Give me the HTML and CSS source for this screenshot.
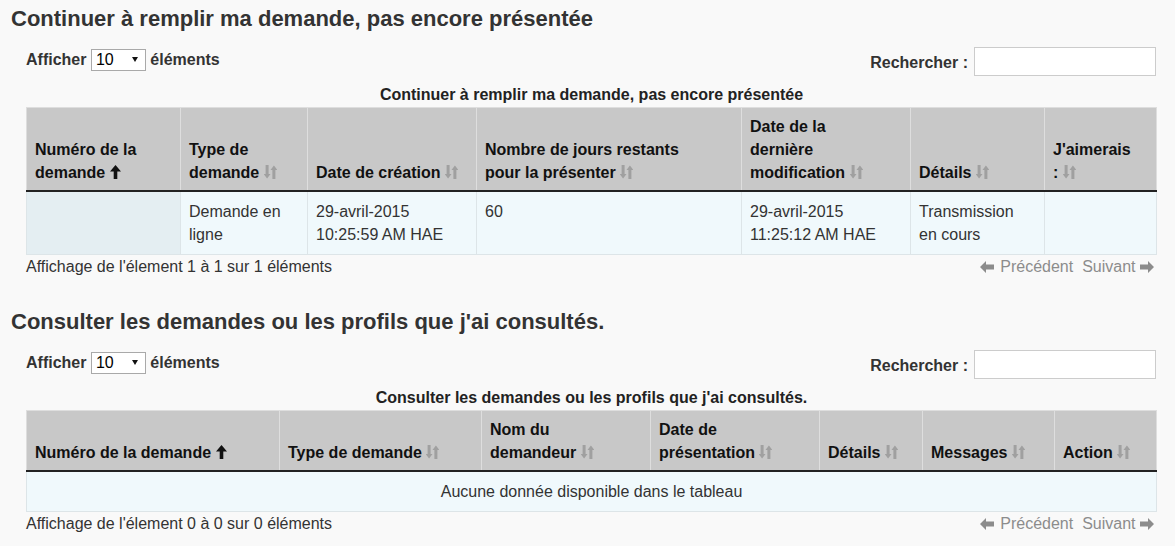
FILE: index.html
```html
<!DOCTYPE html>
<html lang="fr">
<head>
    <meta charset="UTF-8">
    <title>Mes demandes</title>
    <link rel="stylesheet" href="styles.css">
</head>
<body>
    <!-- Demandes en brouillon -->
    <section class="section">
        <h2>Continuer à remplir ma demande, pas encore présentée</h2>
        <div class="dt-wrapper">
            <div class="dt-top">
                <div class="dt-length">
                    <label>Afficher
                        <span class="select-wrap"><select><option>10</option><option>25</option><option>50</option></select></span>
                        éléments</label>
                </div>
                <div class="dt-filter">
                    <label for="search1">Rechercher :</label>
                    <input type="search" id="search1">
                </div>
            </div>
            <table class="dt-table">
                <caption>Continuer à remplir ma demande, pas encore présentée</caption>
                <colgroup>
                    <col class="w154"><col class="w127"><col class="w169"><col class="w265"><col class="w169"><col class="w134"><col class="w112">
                </colgroup>
                <thead>
                    <tr>
                        <th>Numéro de la<br>demande <svg class="sorted-icon" viewBox="0 0 11 14"><path d="M5.5 0 11 6.5H7.3V14H3.7V6.5H0z"/></svg></th>
                        <th>Type de<br>demande <svg class="sort-icon" viewBox="0 0 13 14"><path d="M1.6 0h3v9h1.9L3.1 13.6-.3 9h1.9zM8.4 14V5H6.5L9.9.4 13.3 5h-1.9v9z"/></svg></th>
                        <th>Date de création <svg class="sort-icon" viewBox="0 0 13 14"><path d="M1.6 0h3v9h1.9L3.1 13.6-.3 9h1.9zM8.4 14V5H6.5L9.9.4 13.3 5h-1.9v9z"/></svg></th>
                        <th>Nombre de jours restants<br>pour la présenter <svg class="sort-icon" viewBox="0 0 13 14"><path d="M1.6 0h3v9h1.9L3.1 13.6-.3 9h1.9zM8.4 14V5H6.5L9.9.4 13.3 5h-1.9v9z"/></svg></th>
                        <th>Date de la<br>dernière<br>modification <svg class="sort-icon" viewBox="0 0 13 14"><path d="M1.6 0h3v9h1.9L3.1 13.6-.3 9h1.9zM8.4 14V5H6.5L9.9.4 13.3 5h-1.9v9z"/></svg></th>
                        <th>Détails <svg class="sort-icon" viewBox="0 0 13 14"><path d="M1.6 0h3v9h1.9L3.1 13.6-.3 9h1.9zM8.4 14V5H6.5L9.9.4 13.3 5h-1.9v9z"/></svg></th>
                        <th>J'aimerais<br>: <svg class="sort-icon" viewBox="0 0 13 14"><path d="M1.6 0h3v9h1.9L3.1 13.6-.3 9h1.9zM8.4 14V5H6.5L9.9.4 13.3 5h-1.9v9z"/></svg></th>
                    </tr>
                </thead>
                <tbody>
                    <tr>
                        <td class="sorting-col"></td>
                        <td>Demande en<br>ligne</td>
                        <td>29-avril-2015<br>10:25:59 AM HAE</td>
                        <td>60</td>
                        <td>29-avril-2015<br>11:25:12 AM HAE</td>
                        <td>Transmission<br>en cours</td>
                        <td></td>
                    </tr>
                </tbody>
            </table>
            <div class="dt-bottom">
                <div class="dt-info">Affichage de l'élement 1 à 1 sur 1 éléments</div>
                <div class="dt-paginate">
                    <a class="page-link">
                        <svg class="page-arrow" viewBox="0 0 14 12"><path d="M0 6 6 0v3.6h8v4.8H6V12z"/></svg>
                        Précédent</a>
                    <a class="page-link">Suivant
                        <svg class="page-arrow" viewBox="0 0 14 12"><path d="M14 6 8 0v3.6H0v4.8h8V12z"/></svg></a>
                </div>
            </div>
        </div>
    </section>

    <!-- Demandes consultées -->
    <section class="section">
        <h2>Consulter les demandes ou les profils que j'ai consultés.</h2>
        <div class="dt-wrapper">
            <div class="dt-top">
                <div class="dt-length">
                    <label>Afficher
                        <span class="select-wrap"><select><option>10</option><option>25</option><option>50</option></select></span>
                        éléments</label>
                </div>
                <div class="dt-filter">
                    <label for="search2">Rechercher :</label>
                    <input type="search" id="search2">
                </div>
            </div>
            <table class="dt-table">
                <caption>Consulter les demandes ou les profils que j'ai consultés.</caption>
                <colgroup>
                    <col class="w253"><col class="w202"><col class="w169"><col class="w169"><col class="w103"><col class="w132"><col class="w102">
                </colgroup>
                <thead>
                    <tr>
                        <th>Numéro de la demande <svg class="sorted-icon" viewBox="0 0 11 14"><path d="M5.5 0 11 6.5H7.3V14H3.7V6.5H0z"/></svg></th>
                        <th>Type de demande <svg class="sort-icon" viewBox="0 0 13 14"><path d="M1.6 0h3v9h1.9L3.1 13.6-.3 9h1.9zM8.4 14V5H6.5L9.9.4 13.3 5h-1.9v9z"/></svg></th>
                        <th>Nom du<br>demandeur <svg class="sort-icon" viewBox="0 0 13 14"><path d="M1.6 0h3v9h1.9L3.1 13.6-.3 9h1.9zM8.4 14V5H6.5L9.9.4 13.3 5h-1.9v9z"/></svg></th>
                        <th>Date de<br>présentation <svg class="sort-icon" viewBox="0 0 13 14"><path d="M1.6 0h3v9h1.9L3.1 13.6-.3 9h1.9zM8.4 14V5H6.5L9.9.4 13.3 5h-1.9v9z"/></svg></th>
                        <th>Détails <svg class="sort-icon" viewBox="0 0 13 14"><path d="M1.6 0h3v9h1.9L3.1 13.6-.3 9h1.9zM8.4 14V5H6.5L9.9.4 13.3 5h-1.9v9z"/></svg></th>
                        <th>Messages <svg class="sort-icon" viewBox="0 0 13 14"><path d="M1.6 0h3v9h1.9L3.1 13.6-.3 9h1.9zM8.4 14V5H6.5L9.9.4 13.3 5h-1.9v9z"/></svg></th>
                        <th>Action <svg class="sort-icon" viewBox="0 0 13 14"><path d="M1.6 0h3v9h1.9L3.1 13.6-.3 9h1.9zM8.4 14V5H6.5L9.9.4 13.3 5h-1.9v9z"/></svg></th>
                    </tr>
                </thead>
                <tbody>
                    <tr>
                        <td class="empty-row" colspan="7">Aucune donnée disponible dans le tableau</td>
                    </tr>
                </tbody>
            </table>
            <div class="dt-bottom">
                <div class="dt-info">Affichage de l'élement 0 à 0 sur 0 éléments</div>
                <div class="dt-paginate">
                    <a class="page-link">
                        <svg class="page-arrow" viewBox="0 0 14 12"><path d="M0 6 6 0v3.6h8v4.8H6V12z"/></svg>
                        Précédent</a>
                    <a class="page-link">Suivant
                        <svg class="page-arrow" viewBox="0 0 14 12"><path d="M14 6 8 0v3.6H0v4.8h8V12z"/></svg></a>
                </div>
            </div>
        </div>
    </section>
</body>
</html>
```

FILE: styles.css
```css
* {
    box-sizing: border-box;
}

body {
    margin: 0;
    padding: 0 19px 0 11px;
    background: #f9f9f9;
    font-family: "Liberation Sans", Arial, sans-serif;
    font-size: 16px;
    line-height: 23px;
    color: #333;
}

.section h2 {
    margin: 7px 0 0;
    font-size: 22px;
    line-height: 24px;
    font-weight: bold;
    color: #333;
}

.section + .section h2 {
    margin-top: 32px;
}

.dt-wrapper {
    margin-left: 15px;
}

/* Afficher / Rechercher */
.dt-top {
    display: flex;
    justify-content: space-between;
    align-items: flex-start;
    margin-top: 16px;
}

.dt-length {
    padding-top: 1px;
    font-weight: bold;
}

.select-wrap {
    position: relative;
    display: inline-block;
    vertical-align: top;
}

.select-wrap select {
    appearance: none;
    -webkit-appearance: none;
    width: 55px;
    height: 22px;
    padding: 0 0 0 4px;
    border: 1px solid #a9a9a9;
    border-radius: 0;
    background: #fff;
    font-family: inherit;
    font-size: 16px;
    font-weight: normal;
    color: #000;
}

.select-wrap::after {
    content: "";
    position: absolute;
    right: 8px;
    top: 9px;
    border-left: 3.5px solid transparent;
    border-right: 3.5px solid transparent;
    border-top: 5px solid #111;
    pointer-events: none;
}

.dt-filter {
    display: flex;
    align-items: center;
    gap: 6px;
    font-weight: bold;
}

.dt-filter label {
    padding-top: 1px;
}

.dt-filter input {
    width: 182px;
    height: 29px;
    border: 1px solid #ccc;
    background: #fff;
}

/* Tableau */
.dt-table {
    width: 100%;
    margin-top: 5px;
    border-collapse: collapse;
    table-layout: fixed;
}

.dt-table caption {
    font-weight: bold;
    text-align: center;
    padding: 2px 0 1px;
    color: #222;
}

.w102 { width: 102px; }
.w103 { width: 103px; }
.w112 { width: 112px; }
.w127 { width: 127px; }
.w132 { width: 132px; }
.w134 { width: 134px; }
.w154 { width: 154px; }
.w169 { width: 169px; }
.w202 { width: 202px; }
.w253 { width: 253px; }
.w265 { width: 265px; }

.dt-table th {
    background: #c8c8c8;
    border: 1px solid #dedede;
    border-bottom: 2px solid #222;
    padding: 7px 8px 6px;
    text-align: left;
    vertical-align: bottom;
    color: #111;
}

.dt-table td {
    background: #f0f9fc;
    border: 1px solid #dde5e8;
    padding: 8px;
    vertical-align: top;
}

.dt-table td.sorting-col {
    background: #e4eef2;
}

.dt-table td.empty-row {
    text-align: center;
}

.sort-icon {
    width: 13px;
    height: 14px;
    fill: #a0a0a0;
    vertical-align: -1px;
}

.sorted-icon {
    width: 11px;
    height: 14px;
    fill: #111;
    vertical-align: -1px;
}

/* Bas du tableau */
.dt-bottom {
    display: flex;
    justify-content: space-between;
}

.dt-paginate {
    display: flex;
    gap: 9px;
}

.page-link {
    color: #8c8c8c;
}

.page-link svg:first-child {
    margin-right: 2px;
}

.page-arrow {
    width: 14px;
    height: 12px;
    fill: #8c8c8c;
    vertical-align: -1px;
}
```
